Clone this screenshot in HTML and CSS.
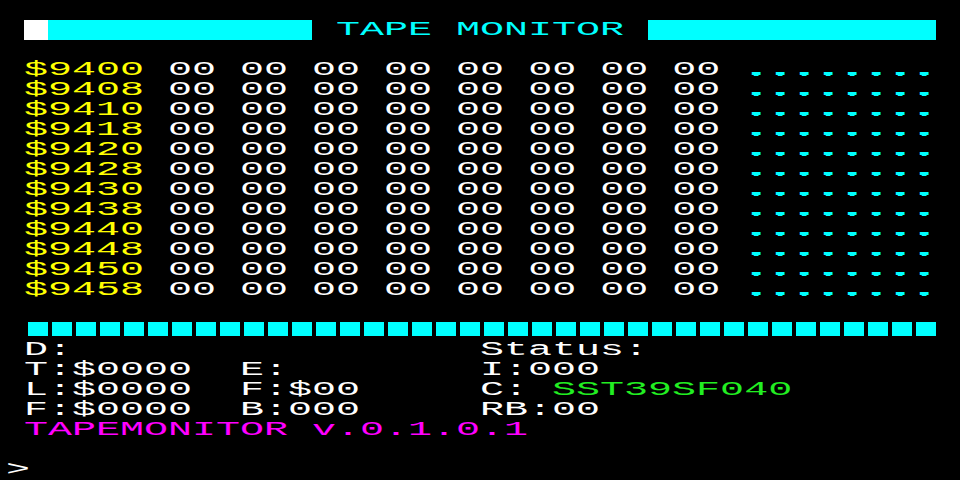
FILE: index.html
```html
<!DOCTYPE html>
<html>
<head>
<meta charset="utf-8">
<title>Tape Monitor</title>
<link rel="stylesheet" href="styles.css">
</head>
<body>
<div class="screen">
  <div class="row"></div>
  <div class="row title-row">
    <span class="bar white"></span><span class="bar cyan left"></span><span class="title"> TAPE MONITOR </span><span class="bar cyan right"></span>
  </div>
  <div class="row"></div>
  <div class="dump">
    <div class="row"> <span class="addr">$9400</span> 00 00 00 00 00 00 00 00 <span class="ascii">........</span></div>
    <div class="row"> <span class="addr">$9408</span> 00 00 00 00 00 00 00 00 <span class="ascii">........</span></div>
    <div class="row"> <span class="addr">$9410</span> 00 00 00 00 00 00 00 00 <span class="ascii">........</span></div>
    <div class="row"> <span class="addr">$9418</span> 00 00 00 00 00 00 00 00 <span class="ascii">........</span></div>
    <div class="row"> <span class="addr">$9420</span> 00 00 00 00 00 00 00 00 <span class="ascii">........</span></div>
    <div class="row"> <span class="addr">$9428</span> 00 00 00 00 00 00 00 00 <span class="ascii">........</span></div>
    <div class="row"> <span class="addr">$9430</span> 00 00 00 00 00 00 00 00 <span class="ascii">........</span></div>
    <div class="row"> <span class="addr">$9438</span> 00 00 00 00 00 00 00 00 <span class="ascii">........</span></div>
    <div class="row"> <span class="addr">$9440</span> 00 00 00 00 00 00 00 00 <span class="ascii">........</span></div>
    <div class="row"> <span class="addr">$9448</span> 00 00 00 00 00 00 00 00 <span class="ascii">........</span></div>
    <div class="row"> <span class="addr">$9450</span> 00 00 00 00 00 00 00 00 <span class="ascii">........</span></div>
    <div class="row"> <span class="addr">$9458</span> 00 00 00 00 00 00 00 00 <span class="ascii">........</span></div>
  </div>
  <div class="row"></div>
  <div class="row"><div class="blocks"></div></div>
  <div class="row"> D:                 Status:</div>
  <div class="row"> T:$0000  E:        I:000</div>
  <div class="row"> L:$0000  F:$00     C: <span class="green">SST39SF040</span></div>
  <div class="row"> F:$0000  B:000     RB:00</div>
  <div class="row magenta"> TAPEMONITOR v.0.1.0.1</div>
  <div class="row"></div>
  <div class="row"><span class="prompt">&gt;</span></div>
</div>
</body>
</html>
```
FILE: styles.css
```css
html, body {
  margin: 0;
  padding: 0;
  background: #000;
  overflow: hidden;
}

.screen {
  width: 480px;
  height: 480px;
  transform: scaleX(2);
  transform-origin: 0 0;
  font-family: "Liberation Mono", "DejaVu Sans Mono", monospace;
  font-weight: normal;
  font-size: 20px;
  letter-spacing: 0;
  line-height: 20px;
  color: #fff;
  display: flex;
  flex-direction: column;
}

.row {
  height: 20px;
  white-space: pre;
}

.title-row {
  display: flex;
  padding-left: 12px;
}

.bar {
  height: 20px;
}

.bar.white {
  width: 12px;
  background: #fff;
}

.bar.cyan {
  background: #00ffff;
}

.bar.left {
  width: 132px;
}

.bar.right {
  width: 144px;
}

.title {
  width: 168px;
  color: #00ffff;
}

.addr {
  color: #ffff00;
}

.ascii {
  color: #00ffff;
  text-shadow: 1px 0 0 #00ffff, -1px 0 0 #00ffff, 0 0.5px 0 #00ffff;
}

.blocks {
  margin: 2px 0 0 12px;
  width: 456px;
  height: 14px;
  background: repeating-linear-gradient(to right, transparent 0 2px, #00ffff 2px 12px);
}

.green {
  color: #22ee22;
}

.magenta {
  color: #ff00ff;
}

.prompt {
  padding-left: 3px;
}
```
